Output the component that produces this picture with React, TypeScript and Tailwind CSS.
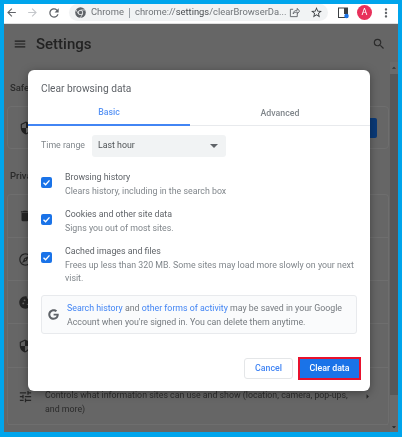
import React from "react";
import {
  MdArrowBack,
  MdArrowForward,
  MdRefresh,
  MdStarBorder,
  MdMoreVert,
  MdMenu,
  MdSearch,
  MdDelete,
  MdOutlineExplore,
  MdCookie,
  MdSecurity,
  MdTune,
  MdArrowRight,
  MdArrowDropUp,
  MdArrowDropDown,
} from "react-icons/md";
import { FaGoogle } from "react-icons/fa";

function ChromeLogo() {
  return (
    <svg width="11" height="11" viewBox="0 0 24 24" className="shrink-0">
      <circle cx="12" cy="12" r="11.5" fill="#5f6368" />
      <circle cx="12" cy="12" r="5.5" fill="#f1f3f4" />
      <circle cx="12" cy="12" r="3.8" fill="#5f6368" />
      <path d="M12 6.5h10M7.2 14.8 2.4 6.4M16.8 14.8 11.8 23.4" stroke="#f1f3f4" strokeWidth="1.6" />
    </svg>
  );
}

function ShareIcon() {
  return (
    <svg width="11" height="11" viewBox="0 0 24 24" fill="none" stroke="#5f6368" strokeWidth="2" className="shrink-0">
      <path d="M9 5H3v16h15v-6" />
      <path d="M9 15c0-5 4-8 9-8V3l5 6-5 6v-4c-4 0-7 1-9 4Z" />
    </svg>
  );
}

function SidePanelIcon() {
  return (
    <svg width="11" height="12" viewBox="0 0 22 24" className="shrink-0">
      <rect x="1" y="2" width="18" height="19" fill="none" stroke="#3c4043" strokeWidth="2" />
      <rect x="12" y="2" width="7" height="12" fill="#3c4043" />
      <circle cx="17" cy="18" r="4.5" fill="#1a73e8" />
    </svg>
  );
}

function Check() {
  return (
    <span className="flex h-[11px] w-[11px] shrink-0 items-center justify-center rounded-[2px] bg-[#1a73e8]">
      <svg width="9" height="9" viewBox="0 0 12 12" fill="none" stroke="#fff" strokeWidth="1.8">
        <path d="M2 6.3 4.8 9 10 3.2" />
      </svg>
    </span>
  );
}

function Option({ title, lines, boxClass }: { title: string; lines: string[]; boxClass: string }) {
  return (
    <div className="flex items-start">
      <div className={`w-[24px] shrink-0 ${boxClass}`}>
        <Check />
      </div>
      <div className="leading-[13.5px] whitespace-nowrap">
        <div className="text-[#5f6368]">{title}</div>
        {lines.map((l) => (
          <div key={l} className="text-[#80868b]">
            {l}
          </div>
        ))}
      </div>
    </div>
  );
}

function BgRow({ icon, children, h, last }: { icon: React.ReactNode; children?: React.ReactNode; h: string; last?: boolean }) {
  return (
    <div className={`flex items-center border-[#6e6e6e] pr-[15px] pl-[10px] ${h} ${last ? "" : "border-b"}`}>
      <span className="w-[27px] shrink-0 text-[#262626]">{icon}</span>
      <div className="flex-1 pt-[13px] text-[8.8px] leading-[13.4px] text-[#2b2b2b]">{children}</div>
      <MdArrowRight size={11} className="text-[#262626]" />
    </div>
  );
}

export default function App() {
  return (
    <div className="h-[437px] w-[402px] bg-[#00a5ec] pt-[4px] pr-[4px] pb-[5px] pl-[4px] font-['Roboto',sans-serif] blur-[0.35px]">
      <div className="relative flex h-full flex-col overflow-hidden">
        {/* Browser toolbar */}
        <div className="flex h-[20px] shrink-0 items-center border-b border-[#e0e0e0] bg-white pb-[2px] pl-[1px]">
          <MdArrowBack size={13} className="text-[#5f6368]" />
          <MdArrowForward size={13} className="ml-[8px] text-[#c4c7cb]" />
          <MdRefresh size={14} className="ml-[8px] text-[#5f6368]" />
          <div className="ml-[8px] flex h-[17px] w-[259px] items-center rounded-full bg-[#f1f3f4] pl-[6px] text-[9.4px] text-[#6f7377]">
            <ChromeLogo />
            <span className="ml-[5px] w-[33px]">Chrome</span>
            <span className="mx-[5px] h-[10px] w-px bg-[#9aa0a6]" />
            <span className="w-[147px] whitespace-nowrap">
              chrome://<span className="text-[#4a4d50]">settings</span>/clearBrowserDa...
            </span>
            <span className="ml-[7px]">
              <ShareIcon />
            </span>
            <MdStarBorder size={13} className="ml-[10px] text-[#3c4043]" />
          </div>
          <span className="ml-[10px]">
            <SidePanelIcon />
          </span>
          <span className="ml-[8px] flex h-[15px] w-[15px] items-center justify-center rounded-full bg-[#e8315b] text-[9px] text-white">
            A
          </span>
          <MdMoreVert size={14} className="ml-[7px] text-[#5f6368]" />
        </div>

        {/* Settings page, dimmed */}
        <div className="flex min-h-0 flex-1 flex-col bg-[#666666]">
          <div className="flex h-[38px] shrink-0 items-center pt-[1px] pr-[12px] pl-[9px] text-[#1f1f1f]">
            <MdMenu size={14} />
            <span className="ml-[9px] flex-1 pt-[1px] text-[15px] font-medium text-[#222222]">Settings</span>
            <MdSearch size={14} className="text-[#2b2b2b]" />
          </div>
          <div className="flex min-h-0 flex-1">
            <div className="min-w-0 flex-1 pr-px pl-[3px]">
              <div className="pt-[20px] pl-[3px] text-[9.5px] leading-[12px] font-medium text-[#2b2b2b]">Safety check</div>
              <div className="mt-[12px] flex h-[43px] items-center justify-between rounded-[4px] border border-[#6e6e6e] pr-[11px] pl-[11px]">
                <MdSecurity size={14} className="text-[#222222]" />
                <span className="h-[20px] w-[60px] rounded-[2px] bg-[#0a3a78]" />
              </div>
              <div className="pt-[21px] pl-[3px] text-[9.5px] leading-[12px] font-medium text-[#2b2b2b]">Privacy and security</div>
              <div className="mt-[12px] rounded-[4px] border-t border-r border-l border-[#6e6e6e]">
                <BgRow h="h-[43px]" icon={<MdDelete size={14} />} />
                <BgRow h="h-[43px]" icon={<MdOutlineExplore size={15} />} />
                <BgRow h="h-[43px]" icon={<MdCookie size={15} />} />
                <BgRow h="h-[44px]" icon={<MdSecurity size={14} />} />
                <BgRow h="h-[57px]" icon={<MdTune size={15} />}>
                  Controls what information sites can use and show (location, camera, pop-ups, and more)
                </BgRow>
              </div>
            </div>
            <div className="flex w-[8px] shrink-0 flex-col items-center bg-[#6a6a6a]">
              <div className="flex h-[12px] shrink-0 items-center justify-center">
                <MdArrowDropUp size={10} className="text-[#333333]" />
              </div>
              <div className="h-[321px] w-full bg-[#585858]" />
              <div className="flex flex-1 items-end justify-center">
                <MdArrowDropDown size={10} className="text-[#222222]" />
              </div>
            </div>
          </div>
        </div>

        {/* Dialog */}
        <div className="absolute top-[66px] left-[24px] h-[321px] w-[342px] rounded-[6px] bg-white text-[8.8px] shadow-[0_2px_10px_rgba(0,0,0,0.35)]">
          <div className="pt-[12px] pl-[13px] text-[10.2px] leading-[14px] text-[#5f6368]">Clear browsing data</div>
          <div className="mt-[6px] flex h-[24px] border-b border-[#e8eaed]">
            <div className="flex h-[24px] w-[162px] items-center justify-center border-b-2 border-[#4285f4] pb-[1px] font-medium text-[#5a95f5]">
              Basic
            </div>
            <div className="flex h-[24px] flex-1 items-center justify-center pb-[1px] font-medium text-[#80868b]">Advanced</div>
          </div>

          <div className="mt-[9px] flex h-[22px] items-center pl-[13px]">
            <span className="w-[51px] text-[#80868b]">Time range</span>
            <div className="flex h-[22px] w-[134px] items-center justify-between rounded-[3px] bg-[#f1f3f4] pr-[8px] pl-[6px] text-[#4f5356]">
              Last hour
              <svg width="8" height="4" viewBox="0 0 8 4">
                <path d="M0 0h8L4 4Z" fill="#5f6368" />
              </svg>
            </div>
          </div>

          <div className="mt-[14px] flex flex-col gap-[10px] pl-[13px]">
            <Option boxClass="pt-[6px]" title="Browsing history" lines={["Clears history, including in the search box"]} />
            <Option boxClass="pt-[6px]" title="Cookies and other site data" lines={["Signs you out of most sites."]} />
            <Option
              boxClass="pt-[7px]"
              title="Cached images and files"
              lines={["Frees up less than 320 MB. Some sites may load more slowly on your next", "visit."]}
            />
          </div>

          <div className="mt-[9.3px] ml-[13px] flex h-[39px] w-[316px] items-center rounded-[3px] border border-[#e8eaed] bg-[#fafbfc] pl-[6px] leading-[14px] whitespace-nowrap text-[#757a7f]">
            <FaGoogle size={11} className="mr-[8px] shrink-0 text-[#5f6368]" />
            <div className="pt-[1px]">
              <div>
                <span className="text-[#4285f4]">Search history</span> and <span className="text-[#4285f4]">other forms of activity</span> may be saved in your Google
              </div>
              <div>Account when you're signed in. You can delete them anytime.</div>
            </div>
          </div>

          <div className="mt-[23px] flex items-center justify-end pr-[9px]">
            <button className="flex h-[21px] w-[49px] items-center justify-center rounded-[3px] border border-[#e4e6e8] bg-white font-medium text-[#4285f4]">
              Cancel
            </button>
            <button className="ml-[5px] flex h-[23px] w-[63px] items-center justify-center border-2 border-[#e8112d] bg-[#1a73e8] font-medium text-white">
              Clear data
            </button>
          </div>
        </div>
      </div>
    </div>
  );
}
